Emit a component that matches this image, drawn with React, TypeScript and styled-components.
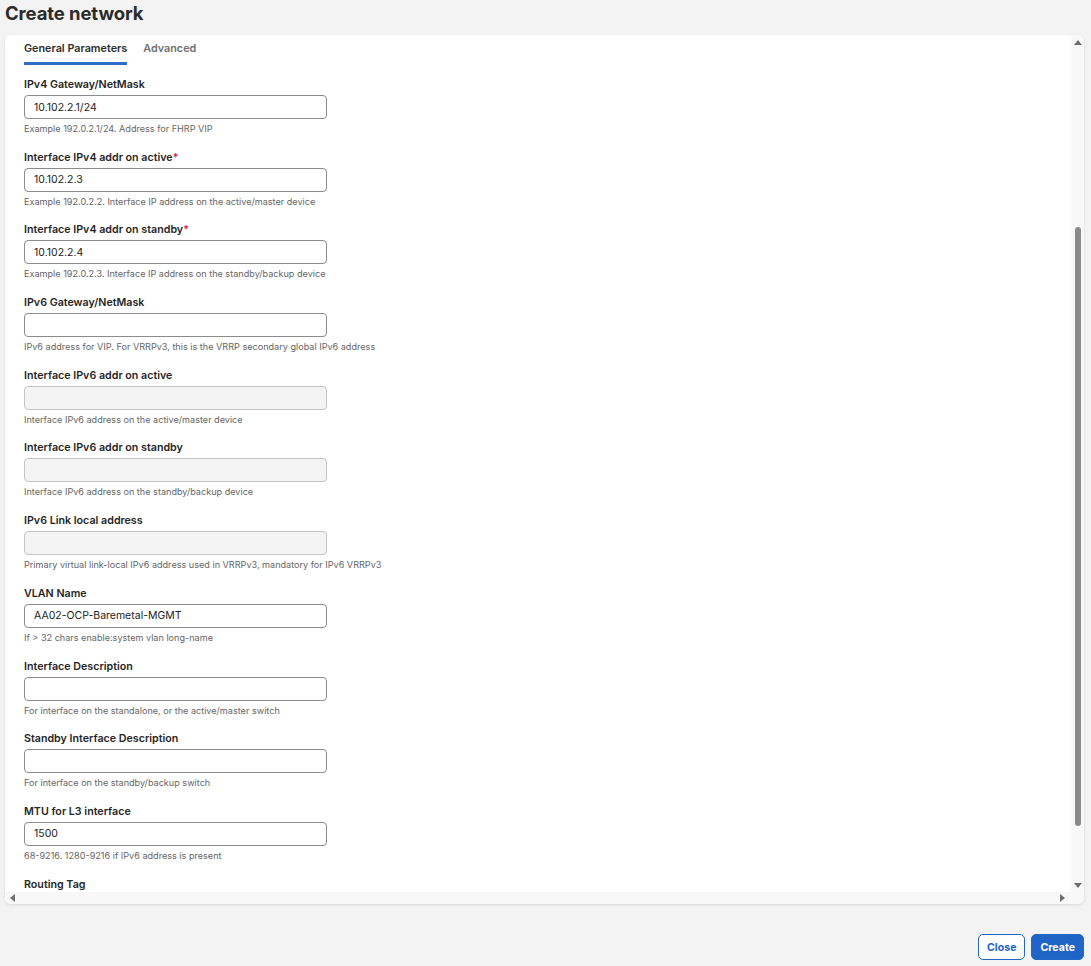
import React from "react";
import styled, { createGlobalStyle } from "styled-components";

const Global = createGlobalStyle`
  html, body { margin: 0; padding: 0; }
  body { background: #f3f3f3; font-family: Inter, "Noto Sans", sans-serif; color: #252525; }
  * { box-sizing: border-box; }
`;

const Page = styled.div`
  height: 966px;
  display: flex;
  flex-direction: column;
  padding: 0 7px 0 5px;
  background: #f3f3f3;
`;

const Title = styled.h1`
  margin: 0;
  height: 35px;
  display: flex;
  align-items: center;
  padding-bottom: 9px;
  font-size: 18.5px;
  font-weight: 700;
  color: #2b2b2b;
  letter-spacing: -0.1px;
`;

const Card = styled.div`
  height: 869px;
  background: #fff;
  border-radius: 6px;
  box-shadow: 0 1px 3px rgba(0, 0, 0, 0.12);
  display: flex;
  flex-direction: column;
  overflow: hidden;
`;

const CardBody = styled.div`
  flex: 1;
  min-height: 0;
  display: flex;
`;

const Content = styled.div`
  flex: 1;
  overflow: hidden;
  padding: 0 19px;
`;

const Tabs = styled.div`
  display: flex;
  gap: 16px;
  padding-top: 7px;
`;

const Tab = styled.div<{ $active?: boolean }>`
  font-size: 10.8px;
  font-weight: 600;
  line-height: 14px;
  padding-bottom: 6px;
  color: ${(p) => (p.$active ? "#2d2d2d" : "#707070")};
  border-bottom: 3px solid ${(p) => (p.$active ? "#2f6bc9" : "transparent")};
`;

const Fields = styled.div`
  display: flex;
  flex-direction: column;
  gap: 15.7px;
  padding-top: 13px;
`;

const Field = styled.div`
  display: flex;
  flex-direction: column;
`;

const Label = styled.label`
  font-size: 10.7px;
  font-weight: 600;
  line-height: 14px;
  color: #262626;
`;

const Required = styled.span`
  color: #d21f2b;
`;

const Input = styled.input`
  margin-top: 3px;
  width: 303px;
  height: 24px;
  border: 1px solid ${(p) => (p.disabled ? "#c4c4c4" : "#8b8b8b")};
  background: ${(p) => (p.disabled ? "#f3f3f3" : "#fff")};
  border-radius: 4px;
  padding: 0 9px;
  font-family: Inter, "Noto Sans", sans-serif;
  font-size: 10.5px;
  color: #222;
  outline: none;
`;

const Help = styled.div`
  margin-top: 4px;
  font-size: 9.1px;
  line-height: 12px;
  color: #666;
`;

const VScroll = styled.div`
  width: 13px;
  background: #f8f8f8;
  display: flex;
  flex-direction: column;
  align-items: center;
  padding: 3px 0 2px;
`;

const Arrow = styled.svg`
  flex: none;
  display: block;
`;

const Thumb = styled.div`
  width: 6px;
  height: 599px;
  margin-top: 179px;
  border-radius: 3px;
  background: #8a8a8a;
`;

const Spacer = styled.div`
  flex: 1;
`;

const HScroll = styled.div`
  height: 12px;
  background: #f8f8f8;
  display: flex;
  align-items: center;
  padding: 0 17px 0 3px;
`;

const Footer = styled.div`
  flex: 1;
  display: flex;
  justify-content: flex-end;
  align-items: flex-start;
  gap: 6px;
  padding-top: 30px;
`;

const Button = styled.button<{ $primary?: boolean }>`
  height: 26px;
  padding: 0 8px;
  border-radius: 5px;
  border: 1.5px solid #2466c6;
  background: ${(p) => (p.$primary ? "#1f64c7" : "#fff")};
  color: ${(p) => (p.$primary ? "#fff" : "#2466c6")};
  font-family: Inter, "Noto Sans", sans-serif;
  font-size: 10.6px;
  font-weight: 700;
  cursor: pointer;
`;

type F = {
  label: string;
  value?: string;
  help: string;
  required?: boolean;
  disabled?: boolean;
};

const fields: F[] = [
  { label: "IPv4 Gateway/NetMask", value: "10.102.2.1/24", help: "Example 192.0.2.1/24. Address for FHRP VIP" },
  { label: "Interface IPv4 addr on active", value: "10.102.2.3", required: true, help: "Example 192.0.2.2. Interface IP address on the active/master device" },
  { label: "Interface IPv4 addr on standby", value: "10.102.2.4", required: true, help: "Example 192.0.2.3. Interface IP address on the standby/backup device" },
  { label: "IPv6 Gateway/NetMask", value: "", help: "IPv6 address for VIP. For VRRPv3, this is the VRRP secondary global IPv6 address" },
  { label: "Interface IPv6 addr on active", disabled: true, help: "Interface IPv6 address on the active/master device" },
  { label: "Interface IPv6 addr on standby", disabled: true, help: "Interface IPv6 address on the standby/backup device" },
  { label: "IPv6 Link local address", disabled: true, help: "Primary virtual link-local IPv6 address used in VRRPv3, mandatory for IPv6 VRRPv3" },
  { label: "VLAN Name", value: "AA02-OCP-Baremetal-MGMT", help: "If > 32 chars enable:system vlan long-name" },
  { label: "Interface Description", value: "", help: "For interface on the standalone, or the active/master switch" },
  { label: "Standby Interface Description", value: "", help: "For interface on the standby/backup switch" },
  { label: "MTU for L3 interface", value: "1500", help: "68-9216. 1280-9216 if IPv6 address is present" },
];

const Tri = ({ dir }: { dir: "up" | "down" | "left" | "right" }) => {
  const pts = {
    up: "1,7 5,2 9,7",
    down: "1,3 9,3 5,8",
    left: "7,1 7,9 2,5",
    right: "3,1 3,9 8,5",
  }[dir];
  return (
    <Arrow width="10" height="10" viewBox="0 0 10 10">
      <polygon points={pts} fill="#6f6f6f" />
    </Arrow>
  );
};

export default function App() {
  return (
    <>
      <Global />
      <Page>
        <Title>Create network</Title>
        <Card>
          <CardBody>
            <Content>
              <Tabs>
                <Tab $active>General Parameters</Tab>
                <Tab>Advanced</Tab>
              </Tabs>
              <Fields>
                {fields.map((f) => (
                  <Field key={f.label}>
                    <Label>
                      {f.label}
                      {f.required && <Required>*</Required>}
                    </Label>
                    <Input defaultValue={f.value ?? ""} disabled={f.disabled} readOnly={!f.disabled} />
                    <Help>{f.help}</Help>
                  </Field>
                ))}
                <Field>
                  <Label>Routing Tag</Label>
                </Field>
              </Fields>
            </Content>
            <VScroll>
              <Tri dir="up" />
              <Thumb />
              <Spacer />
              <Tri dir="down" />
            </VScroll>
          </CardBody>
          <HScroll>
            <Tri dir="left" />
            <Spacer />
            <Tri dir="right" />
          </HScroll>
        </Card>
        <Footer>
          <Button>Close</Button>
          <Button $primary>Create</Button>
        </Footer>
      </Page>
    </>
  );
}
